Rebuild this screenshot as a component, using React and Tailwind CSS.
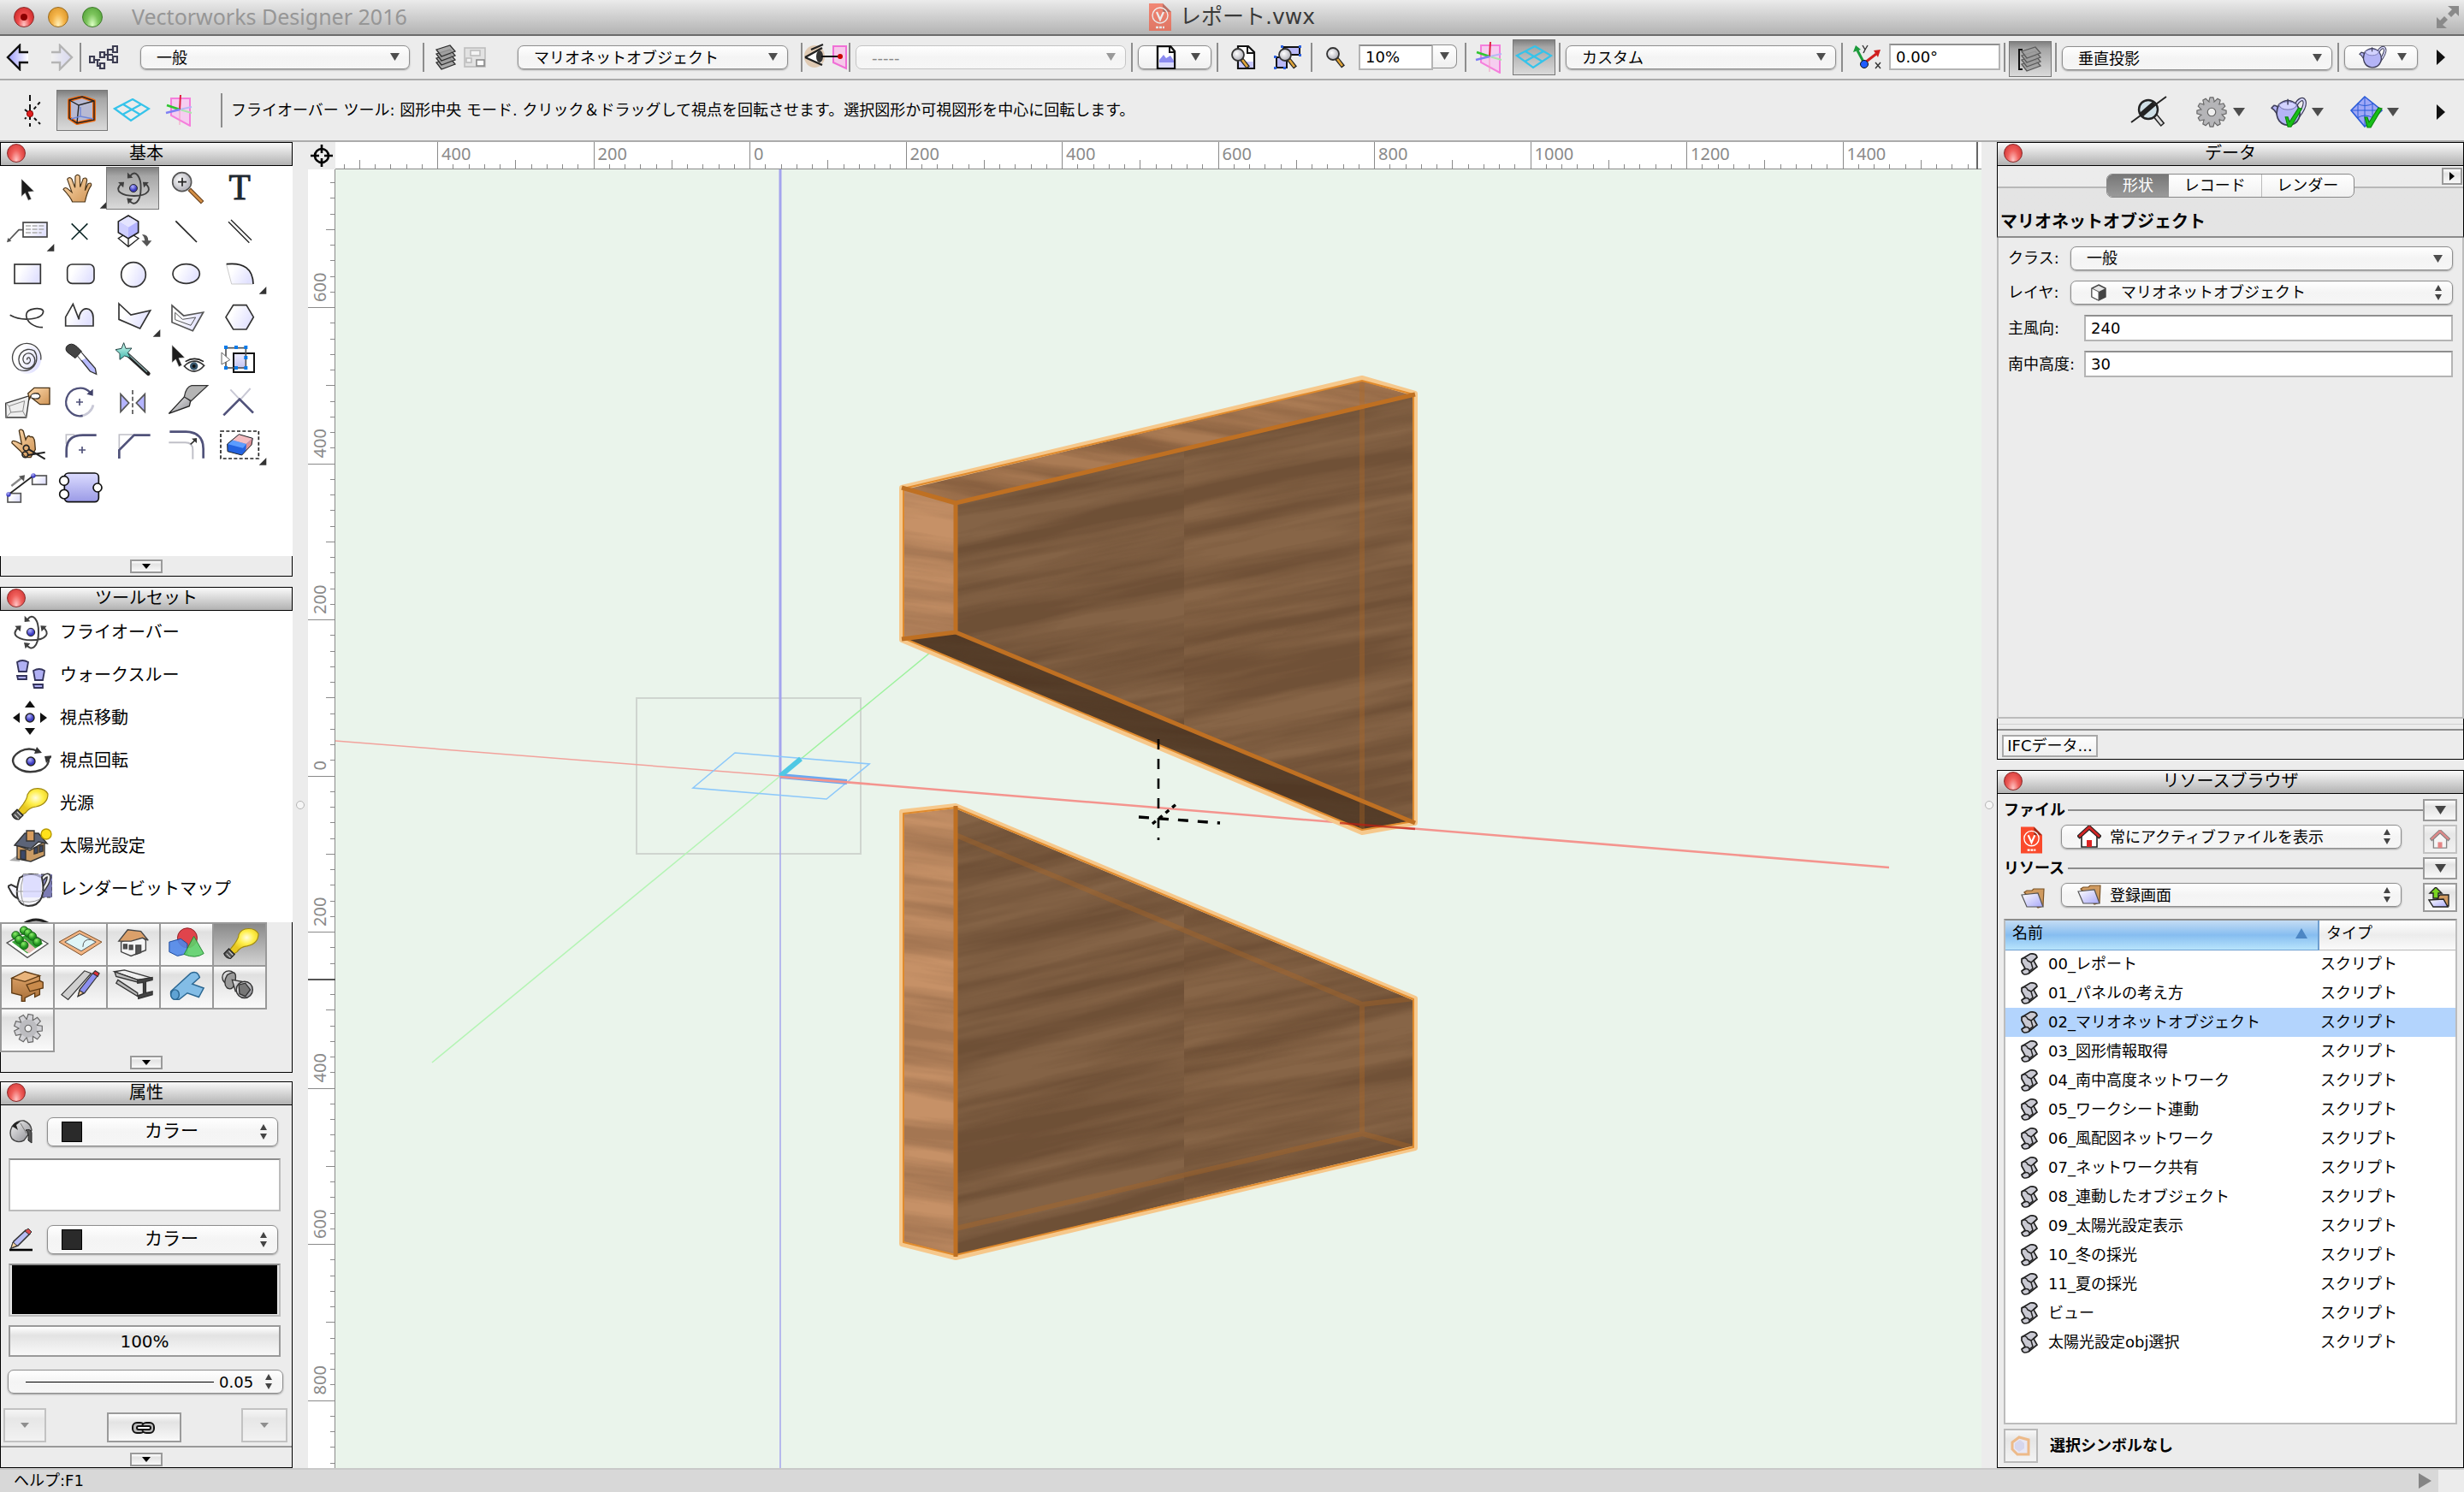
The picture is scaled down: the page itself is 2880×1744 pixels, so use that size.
import React, { useState } from 'react';
import clsx from 'clsx';

const rootFont = "font-['DejaVu_Sans','Noto_Sans_CJK_JP',sans-serif]";

/* ---------- shared gradients and filters ---------- */

const Stops = ({ id, from, to, x2 = 0, y2 = 1 }) => (
  <linearGradient id={id} x1="0" y1="0" x2={x2} y2={y2}>
    <stop offset="0" stopColor={from} />
    <stop offset="1" stopColor={to} />
  </linearGradient>
);

const Defs = () => (
  <svg className="absolute w-0 h-0" aria-hidden="true">
    <defs>
      <linearGradient id="lav" x1="0" y1="0" x2="1" y2="0.4">
        <stop offset="0.3" stopColor="#ffffff" />
        <stop offset="1" stopColor="#e2e2ff" />
      </linearGradient>
      <Stops id="blue" from="#dcdcff" to="#9a9ae6" />
      <Stops id="fold" from="#ffffff" to="#a8a8f8" x2={1} y2={1} />
      <Stops id="skin" from="#ffdcb0" to="#cf9455" x2={1} />
      <Stops id="metal" from="#f4f4f4" to="#8a8a90" x2={1} y2={1} />
      <Stops id="wand" from="#d7fff4" to="#3fb5ab" />
      <Stops id="tan" from="#e0a56a" to="#a86f38" />
      <Stops id="arrowL" from="#9c9cff" to="#ffffff" x2={1} y2={0} />
      <radialGradient id="ball" cx="0.4" cy="0.3">
        <stop offset="0" stopColor="#b5b5ff" />
        <stop offset="1" stopColor="#3b3bc0" />
      </radialGradient>
      <radialGradient id="bulb" cx="0.6" cy="0.35">
        <stop offset="0" stopColor="#fffde0" />
        <stop offset="0.5" stopColor="#ffef4a" />
        <stop offset="1" stopColor="#e8c820" />
      </radialGradient>
      <radialGradient id="leaf" cx="0.4" cy="0.3">
        <stop offset="0" stopColor="#8df06a" />
        <stop offset="1" stopColor="#1c8f1c" />
      </radialGradient>
      <radialGradient id="glass" cx="0.4" cy="0.4">
        <stop offset="0" stopColor="#ffffff" />
        <stop offset="1" stopColor="#bdbdc4" />
      </radialGradient>
    </defs>
  </svg>
);

/* ---------- small icons ---------- */

const Down = ({ className = 'w-3 h-3 text-[#4d4d4d]' }) => (
  <svg viewBox="0 0 12 12" preserveAspectRatio="none" className={className}><path d="M0 0H12L6 12Z" fill="currentColor" /></svg>
);
const UpDown = () => (
  <svg viewBox="0 0 10 18" className="w-[10px] h-[18px]"><path d="M5 0L9 7H1ZM5 18L9 11H1Z" fill="#444" /></svg>
);
const MoreArrow = () => (
  <svg viewBox="0 0 10 18" className="w-[10px] h-[18px]"><path d="M0 0L10 9L0 18Z" fill="#111" /></svg>
);

const BackArrow = ({ dim }) => (
  <svg viewBox="0 0 28 32" className={clsx('w-7 h-8', dim && 'opacity-25 -scale-x-100')}>
    <path d="M26 10H16V2L2 16L16 30V22H26" fill="url(#arrowL)" stroke="#111" strokeWidth="2.4" />
  </svg>
);
const NodesIcon = () => (
  <svg viewBox="0 0 34 28" className="w-[34px] h-7" fill="none" stroke="#3d3d52" strokeWidth="2.2">
    <path d="M6 17H13M10 17V24H13M18 11H22V5H28M18 11H28M22 11V17H28" />
    <path d="M1 13H6V20H1ZM13 8H18V14H13ZM13 21H18V27H13ZM28 1H33V8H28ZM28 13H33V20H28Z" fill="#ececec" />
  </svg>
);
const LayersIcon = ({ bracket }) => (
  <svg viewBox="0 0 32 30" className="w-8 h-[30px]">
    {bracket && <path d="M7 4H3V27H7" fill="none" stroke="#111" strokeWidth="2" />}
    {[15, 10, 5, 0].map(y => (
      <path key={y} d={`M6 ${y + 6}L22 ${y + 1}L28 ${y + 8}L12 ${y + 14}Z`} fill="#9d9d9d" fillOpacity="0.85" stroke={bracket ? '#5a5a5a' : '#2f2f2f'} strokeWidth="1.3" />
    ))}
  </svg>
);
const SheetIcon = () => (
  <svg viewBox="0 0 26 24" className="w-[26px] h-6" stroke="#bdbdbd" strokeWidth="1.6" fill="#e2e2e2">
    <rect x="1" y="1" width="24" height="22" /><rect x="8" y="4" width="11" height="6" fill="#f4f4f4" /><rect x="3" y="13" width="6" height="5" fill="#f4f4f4" />
    <rect x="15" y="15" width="9" height="7" fill="#fff" stroke="#8a8a8a" />
  </svg>
);
const EyeIcon = () => (
  <svg viewBox="0 0 50 34" className="w-[50px] h-[34px]">
    <ellipse cx="12" cy="16" rx="12" ry="13" fill="#d9b48e" opacity="0.6" />
    <path d="M1 17L18 8Q24 14 20 24Z" fill="#fff" />
    <path d="M1 17L21 6M1 17L21 26M8 8L22 2" fill="none" stroke="#222" strokeWidth="2.4" />
    <ellipse cx="18" cy="16" rx="4" ry="7" fill="#333" />
    <path d="M34 4H49V30L34 23Z" fill="#f6c8ea" stroke="#f06fd6" strokeWidth="2" />
    <path d="M20 16H41" stroke="#111" strokeWidth="2" /><circle cx="42" cy="16" r="3" fill="#c00" />
  </svg>
);
const Plane = () => (
  <svg viewBox="0 0 44 28" className="w-11 h-7" fill="none" stroke="#35c3ea" strokeWidth="2.2">
    <path d="M23 1L42 12L21 26L2 12ZM12 7L32 19M33 7L11 19" />
  </svg>
);
const PinkPlane = () => (
  <svg viewBox="0 0 34 38" className="w-[34px] h-[38px]" fill="none" strokeWidth="2">
    <path d="M8 5H30V37L8 25Z" fill="#f6cdf0" stroke="#f57fdc" />
    <path d="M18 18V36" stroke="#f59ac0" strokeWidth="1" /><path d="M18 18L32 22" stroke="#a8e8a8" /><path d="M18 18L32 15" stroke="#b8b8f4" />
    <path d="M19 1L18 18" stroke="#e02040" /><path d="M3 13L18 18" stroke="#2fc52f" strokeWidth="2.6" /><path d="M2 22L18 18" stroke="#8080f4" strokeWidth="2.4" />
  </svg>
);
const PageIcon = () => (
  <svg viewBox="0 0 24 28" className="w-6 h-7">
    <path d="M2 1H17L22 7V27H2Z" fill="#fff" stroke="#111" strokeWidth="2.4" /><path d="M16 1V8H22" fill="none" stroke="#111" strokeWidth="2" />
    <path d="M4 17L9 11L12 15L17 12L21 18V20H4Z" fill="#8c8cf0" /><path d="M4 20H21V26H4Z" fill="#d9d9ff" />
  </svg>
);
const Lens = ({ x = 0, y = 0 }) => (
  <g transform={`translate(${x} ${y})`}>
    <path d="M12 14L20 24" stroke="#222" strokeWidth="5" /><path d="M13 15L19 23" stroke="#e0a53a" strokeWidth="2.6" />
    <circle cx="8" cy="9" r="7" fill="url(#glass)" stroke="#333" strokeWidth="1.8" />
  </g>
);
const FitPage = () => (
  <svg viewBox="0 0 32 30" className="w-8 h-[30px]">
    <path d="M9 2H21L28 9V28H9Z" fill="#fff" stroke="#111" strokeWidth="2.2" /><path d="M20 2V10H28" fill="none" stroke="#111" strokeWidth="2" />
    <path d="M10 20H27V27H10Z" fill="#c9c9ff" /><Lens x={1} y={3} />
  </svg>
);
const FitObjects = () => (
  <svg viewBox="0 0 34 30" className="w-[34px] h-[30px]">
    <path d="M12 3H31V12H12ZM4 15H16V27H4Z" fill="#b9b9f7" stroke="#111" strokeWidth="2" />
    <path d="M1 13h3v3H1zM1 26h3v3H1zM12 26h3v3h-3zM9 1h3v3H9zM30 1h3v3h-3zM30 11h3v3h-3z" fill="#2a5fe0" /><Lens x={6} y={3} />
  </svg>
);
const Magnifier = () => (
  <svg viewBox="0 0 22 26" className="w-[22px] h-[26px]"><Lens /></svg>
);
const AxesIcon = () => (
  <svg viewBox="0 0 34 30" className="w-[34px] h-[30px]">
    <path d="M13 22L5 7" stroke="#1b9a3a" strokeWidth="3" /><path d="M0 9L3 1L9 6Z" fill="#1b9a3a" />
    <path d="M14 21L27 11" stroke="#d02020" strokeWidth="3" /><path d="M24 7L32 6L29 15Z" fill="#d02020" />
    <circle cx="13" cy="23" r="4.5" fill="#1f5cff" stroke="#111" />
    <path d="M11 1L14 6L17 1M14 6L12 10M26 21L32 28M32 21L26 28" fill="none" stroke="#333" strokeWidth="1.4" />
  </svg>
);
const TeapotShape = () => (
  <g strokeLinejoin="round">
    <path d="M31 10C38 -3 49 4 34 24" fill="none" stroke="#3f3f5a" strokeWidth="4.6" />
    <path d="M31 10C38 -3 49 4 34 24" fill="none" stroke="#dcdcff" strokeWidth="2" />
    <path d="M10 25C6 20 6 16 1 14L4 11C9 11 10 15 12 17" fill="#b4b4f6" stroke="#3f3f5a" strokeWidth="1.6" />
    <path d="M10 10C4 22 9 34 21 35C34 35 40 22 32 10Q21 0 10 10Z" fill="#b4b4f6" stroke="#3f3f5a" strokeWidth="1.8" />
    <path d="M10 10Q12 16 21 16Q30 16 32 10Q21 2 10 10Z" fill="#d2d2ff" stroke="#6f6fa8" strokeWidth="1" />
    <path d="M21 3V10" stroke="#3f3f5a" strokeWidth="1.6" />
  </g>
);
const Check = () => <path d="M18 25L21 25L23 31L34 14L38 15L25 37L21 37Z" fill="#18c018" stroke="#0d860d" strokeWidth="1.2" />;
const TeapotIcon = ({ check, className }) => (
  <svg viewBox="0 0 46 38" className={className}><TeapotShape />{check && <Check />}</svg>
);
const NetIcon = () => (
  <svg viewBox="0 0 44 38" className="w-11 h-[38px]">
    <path d="M18 1L38 17L18 36L2 17Z" fill="#9fa8f6" stroke="#2a5bd8" strokeWidth="1.6" />
    <path d="M18 1V36M2 17H38M9 9Q18 14 28 9M9 26Q18 20 28 26M10 9V26M27 9V26" fill="none" stroke="#2a5bd8" />
    <Check />
  </svg>
);
const teeth = Array.from({ length: 12 }, (_, i) => i * 30);
const Gear = ({ className }) => (
  <svg viewBox="-20 -20 40 40" className={className}>
    <g fill="#b5b5b8" stroke="#666" strokeWidth="1.2">
      {teeth.map(a => <path key={a} d="M-4 -11L-2 -18H2L4 -11Z" transform={`rotate(${a})`} />)}
      <circle r="12.5" stroke="none" /><circle r="5" fill="#efefef" />
    </g>
  </svg>
);
const NoLens = () => (
  <svg viewBox="0 0 44 38" className="w-11 h-[38px]">
    <path d="M28 22L38 34" stroke="#222" strokeWidth="6" /><path d="M29 23L37 33" stroke="#ddd" strokeWidth="3" />
    <circle cx="21" cy="16" r="11" fill="#cfdfe6" stroke="#222" strokeWidth="2.4" />
    <path d="M13 22L28 9" stroke="#222" strokeWidth="6" /><path d="M1 31L42 1" stroke="#222" strokeWidth="2" />
  </svg>
);
const PivotIcon = () => (
  <svg viewBox="0 0 28 38" className="w-7 h-[38px]" fill="none" stroke="#111" strokeWidth="2">
    <path d="M15 1V38" strokeDasharray="7 4" /><path d="M15 23L27 9M15 23L27 35M9 18L15 23L9 29" strokeDasharray="4 3" />
    <circle cx="15" cy="23" r="3.6" fill="#e02020" stroke="#900" strokeWidth="1" />
  </svg>
);
const BoxIcon = () => (
  <svg viewBox="0 0 36 34" className="w-9 h-[34px]">
    <path d="M3 5L18 1L32 6V28L12 32L3 26Z" fill="#b8bad2" stroke="#f06a10" strokeWidth="4" strokeLinejoin="round" />
    <path d="M3 5L18 1L32 6V28L12 32L3 26ZM3 5L14 11L32 6M14 11L12 32" fill="none" stroke="#222" strokeWidth="1.4" />
    <path d="M16 13V24L5 27M16 24L31 27" fill="none" stroke="#6f86d8" strokeWidth="1.4" />
  </svg>
);
const VwxIcon = ({ className }) => (
  <svg viewBox="0 0 26 32" className={className}>
    <path d="M0 0H16L26 10V32H0Z" fill="#fa4a2c" /><path d="M16 0V10H26Z" fill="#9c2a18" />
    <circle cx="13" cy="14" r="9" fill="none" stroke="#fff" strokeWidth="1.4" />
    <path d="M9 10L13 19L17 10" fill="none" stroke="#fff" strokeWidth="2.2" /><path d="M8 28H18" stroke="#fff" strokeWidth="2.4" strokeDasharray="3 1" />
  </svg>
);
const HomeIcon = ({ className }) => (
  <svg viewBox="0 0 28 26" className={className}>
    <path d="M5 12V25H23V12L14 4Z" fill="#fff" stroke="#222" strokeWidth="1.6" /><path d="M11 17H17V25H11Z" fill="#d22" />
    <path d="M1 14L14 2L27 14" fill="none" stroke="#222" strokeWidth="5" /><path d="M2 13L14 2L26 13" fill="none" stroke="#d32626" strokeWidth="2.8" />
  </svg>
);
const FolderIcon = ({ up }) => (
  <svg viewBox="0 0 28 24" className="w-7 h-6">
    {up ? (
      <g stroke="#222" strokeWidth="1.4">
        <path d="M11 12L14 9H24V22H8Z" fill="#cf9a60" /><path d="M1 15L18 14L23 23H6Z" fill="url(#fold)" />
        <path d="M9 0L16 7H12V13H6V7H2Z" fill="#7ad420" />
      </g>
    ) : (
      <g stroke="#555" strokeWidth="1.2">
        <path d="M4 5L7 3H13L15 1H27L26 21L20 23Z" fill="#cf9a60" stroke="#7a5224" /><path d="M1 8L20 6L26 22H7Z" fill="url(#fold)" />
      </g>
    )}
  </svg>
);
const ScriptIcon = () => (
  <svg viewBox="0 0 22 26" className="w-[22px] h-[26px]">
    <path d="M2 7L12 1Q19 0 20 5L16 9L20 16L10 24Q3 27 2 21L6 18L2 11Z" fill="#c9c9d2" stroke="#222" strokeWidth="1.7" />
    <path d="M2 7Q7 4 9 9L13 11L20 5M2 21Q9 16 11 21V24M9 9L13 11L15 18L11 21" fill="none" stroke="#222" strokeWidth="1.5" />
  </svg>
);
const CubeIcon = () => (
  <svg viewBox="0 0 18 20" className="w-[18px] h-5">
    <path d="M9 1L17 5V15L9 19L1 15V5Z" fill="#e6e6e6" stroke="#444" strokeWidth="1.4" /><path d="M9 9L17 5V15L9 19Z" fill="#444" /><path d="M1 5L9 9V19L1 15Z" fill="#fff" stroke="#555" />
  </svg>
);
const ResizeArrows = () => (
  <svg viewBox="0 0 30 30" className="w-[30px] h-[30px]"><path d="M15 2H28V14L24 10L19 15L15 11L20 6ZM2 28V15L6 19L11 14L15 18L9 24L14 28Z" fill="#8a8a8a" /></svg>
);

/* ---------- basic palette ---------- */

const pen = { fill: 'url(#lav)', stroke: '#333', strokeWidth: 5 };
const line = { fill: 'none', stroke: '#222', strokeWidth: 5 };
const slate = { fill: 'none', stroke: '#50527a', strokeWidth: 8 };

const Flyover = () => (
  <g fill="none" stroke="#3f3f3f" strokeWidth="6">
    <path d="M424 164C392 192 432 208 470 208C524 208 538 182 510 162M456 136C476 108 496 140 495 180C495 230 470 252 452 222" />
    <path d="M412 158L434 157L431 178ZM502 157L524 158L506 178ZM446 122L446 144L466 142ZM444 216L466 219L449 238Z" fill="#3f3f3f" stroke="none" />
    <circle cx="468" cy="180" r="14" fill="url(#ball)" stroke="#222" strokeWidth="3" />
  </g>
);
const CursorShape = ({ x, y }) => (
  <path transform={`translate(${x} ${y})`} d="M0 0V62L13 50L24 76L35 71L24 46L45 44Z" fill="#1d1d1d" stroke="#ddd" strokeWidth="2" />
);

// every drawing lives on one sheet of 186x150 cells
const tools = [
  { name: '選択', art: <CursorShape x={75} y={147} /> },
  { name: 'パン', more: true, art: <path d="M254 228Q248 212 222 184Q228 173 240 184L252 194L236 148Q244 138 252 148L263 178L264 138Q272 128 280 138L281 176L292 146Q304 140 305 152L298 188L309 164Q322 158 320 170Q306 190 298 228Z" fill="url(#skin)" stroke="#4a3418" strokeWidth="3.5" /> },
  { name: 'フライオーバー', active: true, art: <Flyover /> },
  { name: '拡大', art: <g><path d="M664 184L710 230" stroke="#6b4420" strokeWidth="15" /><path d="M666 186L708 228" stroke="#d58f45" strokeWidth="8" /><circle cx="638" cy="158" r="33" fill="url(#glass)" stroke="#555" strokeWidth="5" /><path d="M624 158H654M639 143V173" {...line} /></g> },
  { name: '文字', art: <text x="840" y="220" textAnchor="middle" fontSize="124" fontFamily="Liberation Serif, serif" fill="#1e2830" stroke="#1e2830" strokeWidth="3">T</text> },

  { name: '引出線', more: true, art: <g><path d="M80 326H66L28 366" fill="none" stroke="#555" strokeWidth="5" /><path d="M24 370L28 354L40 365Z" fill="#555" /><rect x="81" y="300" width="84" height="51" {...pen} stroke="#444" /><path d="M90 312H156M90 324H156M90 336H146" stroke="#aaa" strokeWidth="4" strokeDasharray="18 5" /></g> },
  { name: '基準点', art: <path d="M251 304L307 360M307 304L251 360" {...line} stroke="#102a2a" /> },
  { name: '柱状体', art: <g><path d="M432 345L415 356L450 385L486 356L468 345M450 356V385" {...line} strokeWidth="4" /><path d="M450 276L485 297V335L450 356L415 335V297Z" fill="#b4b4ff" stroke="#222" strokeWidth="5" /><path d="M450 279L482 298L450 317L418 298Z" fill="#e4e4ff" /><path d="M418 298L450 317V353L418 334Z" fill="#cfcfff" /><path d="M498 342Q520 342 520 364H532L515 384L496 364H508Q508 352 498 342Z" fill="#555" /></g> },
  { name: '直線', art: <path d="M616 295L690 369" {...line} /> },
  { name: 'ダブルライン', art: <path d="M801 298L874 371M810 291L882 362" {...line} strokeWidth="4" /> },

  { name: '四角形', art: <rect x="51" y="447" width="91" height="67" {...pen} /> },
  { name: '隅の丸い四角形', art: <rect x="236" y="447" width="94" height="67" rx="17" {...pen} /> },
  { name: '円', art: <circle cx="468" cy="483" r="43" {...pen} /> },
  { name: '楕円', art: <ellipse cx="653" cy="480" rx="47" ry="34" {...pen} /> },
  { name: '円弧', more: true, art: <g><path d="M794 447Q886 440 888 516H812Z" fill="url(#lav)" stroke="#ccc" strokeWidth="3" /><path d="M794 446Q886 436 888 516" {...line} /></g> },

  { name: 'フリーハンド', art: <path d="M35 625C80 650 150 640 152 612C150 595 92 600 92 625C92 650 120 668 150 668" {...line} stroke="#333" /> },
  { name: '曲線', art: <path d="M230 663V632L256 586L277 640C277 592 327 590 327 635V663Z" {...pen} /> },
  { name: '多角形', more: true, art: <path d="M417 585L459 624L527 609L491 672L417 640Z" {...pen} /> },
  { name: '二重線多角形', art: <g><path d="M603 591L644 627L713 615L676 680L603 650Z" {...pen} stroke="#555" /><path d="M614 616L640 640L686 633L669 661L614 641Z" fill="none" stroke="#555" strokeWidth="3" /></g> },
  { name: '正多角形', art: <path d="M818 590H864L889 632L864 675H818L792 632Z" {...pen} /> },

  { name: '螺旋', art: <g><circle cx="94" cy="780" r="50" fill="url(#lav)" /><path d="M96 782a5 5 0 0 1 8-6a12 12 0 0 1-20 14a20 20 0 0 1 30-26a28 28 0 0 1-40 40a36 36 0 0 1 46-54a44 44 0 0 1-54 66a50 50 0 1 1 77-34" fill="none" stroke="#444" strokeWidth="4" /></g> },
  { name: 'スポイト', art: <g><path d="M268 762L280 750L334 812L338 832L316 822Z" fill="#b9bcff" stroke="#333" strokeWidth="4" /><path d="M270 764L282 754L300 776L286 784Z" fill="#fff" /><path d="M234 734Q250 718 270 736L286 752L264 776L240 758Q226 748 234 734Z" fill="#444" stroke="#222" strokeWidth="3" /></g> },
  { name: '属性マジックワンド', art: <g><path d="M448 764L520 830" stroke="#222" strokeWidth="14" strokeLinecap="round" /><path d="M452 764L516 824" stroke="#8aa" strokeWidth="4" /><path d="M434 722L441 742L462 741L448 757L458 775L437 768L420 781L420 760L405 746L426 742Z" fill="url(#wand)" stroke="#244" strokeWidth="3" /></g> },
  { name: '表示切替', art: <g><CursorShape x={603} y={730} /><path d="M646 804Q680 770 716 802Q682 842 646 804Z" fill="#fff" stroke="#333" strokeWidth="5" /><path d="M650 788Q682 768 714 788" {...line} /><circle cx="680" cy="804" r="14" fill="#34546b" /><circle cx="680" cy="804" r="6" fill="#111" /></g> },
  { name: '類似図形選択', art: <g><rect x="819" y="759" width="72" height="66" fill="#fff" stroke="#111" strokeWidth="6" /><rect x="822" y="762" width="40" height="50" fill="url(#blue)" opacity="0.6" /><rect x="792" y="740" width="70" height="70" fill="none" stroke="#555" strokeWidth="5" /><path d="M786 732h12v12h-12zM822 732h12v12h-12zM856 732h12v12h-12zM856 768h12v12h-12zM856 804h12v12h-12zM822 804h12v12h-12zM786 804h12v12h-12z" fill="#0a7ae8" /><path d="M777 756V798L806 782Z" fill="#fff" stroke="#666" strokeWidth="3" /></g> },

  { name: '変形', art: <g><path d="M20 934L103 908L92 984H21Z" fill="#eee" stroke="#333" strokeWidth="4" /><path d="M32 944L86 926L80 962L38 966ZM20 934L32 944M92 984L80 962M21 984L38 966" fill="none" stroke="#888" strokeWidth="3" /><path d="M174 880H120L98 900L104 918Q112 894 134 900Q146 912 134 918L112 916L140 938H174Z" fill="url(#skin)" stroke="#4a3418" strokeWidth="4" /><ellipse cx="124" cy="909" rx="16" ry="9" fill="#fff" stroke="#333" strokeWidth="3" /></g> },
  { name: '回転', art: <g><path d="M327 940A49 49 0 0 1 282 978" {...slate} stroke="#c8c8d6" /><path d="M290 978A49 49 0 1 1 316 896" {...slate} strokeWidth="7" /><path d="M326 884V908L304 902Z" fill="#3f4068" /><path d="M267 930H291M279 918V942" {...slate} strokeWidth="5" /></g> },
  { name: 'ミラー反転', art: <g fill="#b4b4ff" stroke="#555" strokeWidth="5"><path d="M423 902L452 933L423 964ZM508 902L478 933L508 964Z" /><path d="M465 888V980" strokeDasharray="15 8" /></g> },
  { name: '切断', art: <g><path d="M592 970L648 910L668 926L664 944Z" fill="url(#metal)" stroke="#222" strokeWidth="4" /><path d="M646 912Q652 876 672 872H728L670 926Z" fill="#b4b4b4" stroke="#333" strokeWidth="4" /></g> },
  { name: '結合', art: <g><path d="M808 886L842 922L878 882" {...slate} stroke="#c8c8d4" strokeWidth="6" /><path d="M784 976L840 920L888 968" {...slate} /></g> },

  { name: 'トリミング', art: <g><path d="M70 1100L42 1074Q40 1062 56 1068L76 1078L67 1030Q74 1022 82 1032L90 1062Q98 1042 106 1052Q120 1048 122 1072L124 1096L108 1124H90Z" fill="url(#skin)" stroke="#4a3418" strokeWidth="4" /><path d="M98 1094L158 1130M98 1116L158 1106" stroke="#222" strokeWidth="6" /><circle cx="92" cy="1091" r="10" {...line} /><circle cx="88" cy="1114" r="10" {...line} /></g> },
  { name: 'フィレット', art: <g><path d="M232 1076V1044H262" fill="none" stroke="#c0c0c8" strokeWidth="5" /><path d="M233 1124V1100Q233 1046 290 1046H338" {...slate} /><path d="M276 1098H300M288 1086V1110" {...slate} strokeWidth="5" /></g> },
  { name: '面取り', art: <g><path d="M418 1092V1044H466" fill="none" stroke="#c0c0c8" strokeWidth="5" /><path d="M418 1128V1098L470 1046H527" {...slate} /></g> },
  { name: 'オフセット', art: <g><path d="M592 1072H650Q676 1072 676 1098V1130" fill="none" stroke="#c0c0c8" strokeWidth="6" /><path d="M595 1034H652Q713 1036 713 1094V1127" {...slate} /><path d="M668 1078L684 1064" stroke="#333" strokeWidth="5" /><path d="M690 1056V1074L672 1058Z" fill="#333" /></g> },
  { name: '消しゴム', more: true, art: <g><rect x="774" y="1032" width="133" height="96" fill="none" stroke="#222" strokeWidth="5" strokeDasharray="12 7" /><path d="M797 1077L838 1043L886 1057L882 1080L848 1116L798 1103Z" fill="#2463e0" /><path d="M797 1077L814 1063L864 1077L852 1091Z" fill="#5c9cff" /><path d="M814 1063L838 1043L886 1057L864 1077Z" fill="#f4bcc0" /><path d="M864 1077L886 1057L882 1080L862 1101Z" fill="#dc9298" /><path d="M797 1077L838 1043L886 1057L882 1080L848 1116L798 1103Z" fill="none" stroke="#222" strokeWidth="3" /></g> },

  { name: 'コネクタ', art: <g><path d="M40 1224L78 1194" stroke="#888" strokeWidth="7" /><path d="M87 1186L84 1208L66 1190Z" fill="#555" /><rect x="27" y="1250" width="46" height="31" {...pen} stroke="#555" /><rect x="113" y="1188" width="50" height="31" {...pen} stroke="#555" /><path d="M30 1254L117 1188" {...line} /><circle cx="30" cy="1254" r="8" fill="url(#ball)" /><circle cx="117" cy="1188" r="8" fill="url(#ball)" /></g> },
  { name: 'マリオネット', art: <g stroke="#111" strokeWidth="5"><rect x="226" y="1179" width="120" height="101" rx="14" fill="url(#blue)" /><circle cx="225" cy="1206" r="16" fill="#fff" /><circle cx="225" cy="1253" r="16" fill="#fff" /><circle cx="342" cy="1230" r="15" fill="#fff" /></g> },
];

/* ---------- tool sets ---------- */

const BulbShape = () => (
  <g stroke="#a08a10" strokeWidth="1.2">
    <path d="M10 31L17 22Q22 15 22 11A13 11 0 0 1 46 10Q46 22 32 25Q24 26 20 32L15 35Z" fill="url(#bulb)" />
    <path d="M4 34L10 28L17 35L12 40Q6 40 4 34Z" fill="#555" stroke="#222" />
    <path d="M7 34L12 39M10 31L15 36" stroke="#ccc" />
  </g>
);

const sets = [
  ['フライオーバー', <svg viewBox="372 105 186 150" className="w-[62px] h-[50px]"><Flyover /></svg>],
  ['ウォークスルー', (
    <svg viewBox="0 0 50 50" className="w-[50px] h-[50px]" fill="#b0b0f4" stroke="#33335a" strokeWidth="1.8">
      <path d="M10 10Q16 6 23 10L21 21H12ZM10 26H21V30H11ZM29 20Q36 16 42 20L40 31H31ZM29 36H40V40H30Z" />
    </svg>
  )],
  ['視点移動', (
    <svg viewBox="0 0 50 50" className="w-[50px] h-[50px]" fill="#111">
      <path d="M25 5L31 13H19ZM25 45L31 37H19ZM5 25L13 19V31ZM45 25L37 19V31Z" /><circle cx="25" cy="25" r="5" fill="url(#ball)" stroke="#222" strokeWidth="1.4" />
    </svg>
  )],
  ['視点回転', (
    <svg viewBox="0 0 50 50" className="w-[50px] h-[50px]" fill="none" stroke="#3a3a3a" strokeWidth="2.4">
      <path d="M34 14Q24 9 14 14Q0 22 8 32Q20 42 38 36Q48 31 47 22" /><path d="M30 17L39 16L33 9ZM42 20L52 19L44 28Z" fill="#333" stroke="none" />
      <circle cx="26" cy="26" r="5" fill="url(#ball)" stroke="#222" strokeWidth="1.4" />
    </svg>
  )],
  ['光源', <svg viewBox="0 0 50 50" className="w-[50px] h-[50px]"><g transform="translate(0 4)"><BulbShape /></g></svg>],
  ['太陽光設定', (
    <svg viewBox="0 0 52 50" className="w-[52px] h-[50px]" stroke="#333" strokeWidth="1.4">
      <path d="M2 42L14 34V43Z" fill="#aaa" stroke="none" /><path d="M11 24L26 30L43 20V36L27 43L11 40Z" fill="#c99a63" />
      <path d="M8 24L20 10L36 10L46 22L36 20L27 28Z" fill="#5c6478" /><path d="M22 7H31V19H22Z" fill="#d69c5e" />
      <path d="M15 30H21V41L15 40ZM31 27L35 26V33L31 34ZM37 25L41 24V31L37 32Z" fill="#3c4868" /><circle cx="45" cy="11" r="6" fill="#ffe21a" stroke="#b89a00" />
    </svg>
  )],
  ['レンダービットマップ', (
    <svg viewBox="0 0 52 50" className="w-[52px] h-[50px]">
      <rect x="18" y="8" width="34" height="27" fill="#7c7cb4" stroke="#333" strokeDasharray="4 3" />
      <path d="M40 14C50 2 52 14 38 30" fill="none" stroke="#333" strokeWidth="5" /><path d="M40 14C50 2 52 14 38 30" fill="none" stroke="#eee" strokeWidth="2.4" />
      <path d="M14 12C8 30 10 44 24 45C40 45 44 30 40 12Q28 4 14 12ZM12 36C4 34 4 26 0 22L4 20L12 24" fill="#f4f4fb" stroke="#333" strokeWidth="2" />
      <path d="M10 28H42M12 38Q26 43 38 37M18 12Q12 30 20 45" fill="none" stroke="#999" /><rect x="18" y="8" width="21" height="27" fill="#d4d4ff" opacity="0.7" />
    </svg>
  )],
];

const categories = [
  ['造園', <g><path d="M6 23L31 9L56 24L31 41Z" fill="#fff" stroke="#555" strokeWidth="1.4" /><path d="M12 22L32 12L50 24L31 36Z" fill="#3aa53a" /><path d="M27 18L41 30L33 36L25 30Z" fill="#e6c0b8" />{[[27, 8], [32, 11], [37, 15], [43, 22], [17, 14], [21, 19], [27, 26]].map(([x, y]) => <circle key={x} cx={x} cy={y} r="5" fill="url(#leaf)" stroke="#165c16" />)}</g>],
  ['建築', <g><path d="M5 22L30 8L57 22L32 38Z" fill="#f2b482" stroke="#7a4a20" /><path d="M12 22L30 12L50 22L32 33Z" fill="#dff5f7" stroke="#555" /><path d="M34 28Q34 18 44 19" fill="none" stroke="#555" /></g>],
  ['住宅', <g stroke="#444" strokeWidth="1.4"><path d="M16 22V34L28 39L46 32V20L38 12Z" fill="#f5f5f5" /><path d="M13 21L24 7L40 9L49 20L42 17L28 21Z" fill="#dba06a" /><path d="M34 26H40V35L34 37ZM19 25H23V30H19ZM26 26H30V31H26Z" fill="#555" /></g>],
  ['3D', <g><circle cx="32" cy="17" r="12" fill="#e0444c" stroke="#8c1c22" /><path d="M10 22L24 18L32 24V36L20 39L10 34Z" fill="#4f86e8" stroke="#1c4a9c" fillOpacity="0.9" /><path d="M40 15L52 36Q42 43 28 37Z" fill="#5dd06a" stroke="#258a33" fillOpacity="0.9" /></g>],
  ['ビジュアライズ', <g transform="translate(8 2)"><BulbShape /></g>],
  ['家具', <g stroke="#5e3a14" strokeWidth="1.4"><path d="M12 14L26 8L46 11V34L40 37V32L28 38V42H24V35L12 32Z" fill="url(#tan)" /><path d="M12 14L28 18L46 11L28 6Z" fill="#e9b47c" /><path d="M30 22L46 17L50 19V26L34 30Z" fill="#c98b4c" /></g>],
  ['寸法', <g stroke="#333" strokeWidth="1.2"><path d="M8 34L36 5L44 8L16 40Z" fill="#cfcfcf" /><path d="M28 36L30 28L46 8L52 11L36 32Z" fill="#8c90f0" /><path d="M46 8L49 5L54 8L52 12Z" fill="#e03038" /><path d="M28 36L30 29L35 32Z" fill="#f0c896" /></g>],
  ['機械', <g stroke="#333" strokeWidth="1.4"><path d="M8 6L20 4L54 14L36 16Z" fill="#eee" /><path d="M8 6L36 16L37 19L10 12ZM12 16L36 32V36L10 20Z" fill="#bbb" /><path d="M36 16L54 13V16L46 18V32L54 30V34L37 39V35L43 33V19L36 20Z" fill="#444" /></g>],
  ['配管', <g fill="#83bde6" stroke="#2b6792" strokeWidth="1.5"><path d="M12 30L36 8Q44 4 47 13L38 21L52 26L46 37L32 32L22 40Q10 40 12 30Z" /><ellipse cx="17" cy="34" rx="5" ry="6" fill="#5fa3d4" /></g>],
  ['金物', <g stroke="#333" strokeWidth="1.4" fill="url(#metal)"><circle cx="18" cy="13" r="8" /><path d="M16 10Q28 2 26 16Q24 30 16 26Q10 20 16 10Z" fill="#999" /><path d="M22 16L34 18V30L26 30Z" /><circle cx="37" cy="28" r="10" /><path d="M30 22L38 20L44 28L38 36L31 33Z" fill="#777" /></g>],
  ['カスタム', <g transform="translate(32 23)"><g fill="#d2d2d6" stroke="#666" strokeWidth="1.2">{[0, 40, 80, 120, 160, 200, 240, 280, 320].map(a => <path key={a} d="M-4 -9L-3 -17H3L4 -9Z" transform={`rotate(${a + 10})`} />)}<circle r="11" fill="#bcbcc0" stroke="none" /><circle r="4" fill="#f2f2f2" /></g></g>],
];

/* ---------- controls ---------- */

const PopUp = ({ label, options, className, arrow = 'down', disabled, pad = 'pl-[18px]', text = 'text-[18px]', children }) => (
  <div className={clsx('relative flex items-center min-w-0', className)}>
    <select
      aria-label={label}
      disabled={disabled}
      className={clsx(
        'appearance-none w-full h-full rounded-[7px] border bg-linear-to-b from-white via-[#f4f4f4] to-[#f6f6f6] outline-none',
        pad, text,
        disabled ? 'border-[#c4c4c4] text-[#888]' : 'border-[#8e8e8e] text-black shadow-[0_1px_2px_rgba(0,0,0,0.35)]'
      )}
    >
      {options.map(o => <option key={o}>{o}</option>)}
    </select>
    {children && <span className="absolute left-[17px] pointer-events-none flex items-center">{children}</span>}
    <span className="absolute right-[12px] pointer-events-none">
      {arrow === 'down' ? <Down className={clsx('w-[11px] h-[9px]', disabled ? 'text-[#999]' : 'text-[#4d4d4d]')} /> : <UpDown />}
    </span>
  </div>
);

const Sep = ({ className = 'h-[34px]' }) => <div className={clsx('w-[2px] shrink-0 bg-[#8d8d8d]', className)} />;

const pressed = 'border border-[#777] bg-linear-to-b from-[#7f7f7f] via-[#a6a6a6] via-20% to-[#dadada]';
const square = 'border-2 border-[#9a9a9a] bg-linear-to-b from-white via-[#e3e3e3] via-30% to-[#f8f8f8] flex items-center justify-center';

const IconButton = ({ name, active, className, children }) => (
  <button type="button" aria-label={name} className={clsx('flex items-center justify-center shrink-0', active && pressed, className)}>
    {children}
  </button>
);

const PanelTitle = ({ children }) => (
  <div className="relative h-7 shrink-0 flex items-center justify-center border border-black bg-linear-to-b from-[#fafafa] to-[#b2b2b2] text-[20px] leading-6 pb-[2px]">
    <button type="button" aria-label="閉じる" className="absolute left-[7px] w-[22px] h-[22px] rounded-full border border-[#8a2a2a] bg-radial-[at_50%_90%] from-[#ffc4c4] via-[#f0605c] via-45% to-[#c92a2a]" />
    <h2>{children}</h2>
  </div>
);

const Expander = () => (
  <button type="button" aria-label="展開" className={clsx(square, 'w-[38px] h-4')}>
    <Down className="w-[10px] h-[6px] text-black" />
  </button>
);

const Field = ({ value, label, id, className }) => (
  <input id={id} aria-label={label} defaultValue={value} className={clsx('bg-white border-2 border-[#b4b4b4] border-t-[#8f8f8f] text-[18px] px-[6px] outline-none min-w-0', className)} />
);

/* ---------- top bars ---------- */

const TitleBar = () => (
  <header className="h-[42px] shrink-0 grid grid-cols-[1fr_auto_1fr] items-center border-b-2 border-[#6b6b6b] bg-linear-to-b from-[#ebebeb] to-[#b3b3b3] leading-8">
    <div className="flex items-center pl-4 gap-4">
      <button type="button" aria-label="閉じる" className="w-6 h-6 rounded-full border border-[#8a2a2a] bg-radial-[at_50%_90%] from-[#ffc4c4] via-[#ee4b4b] via-45% to-[#c02020] flex items-center justify-center">
        <span className="w-2 h-2 rounded-full bg-[#8c0000]" />
      </button>
      <button type="button" aria-label="しまう" className="w-6 h-6 rounded-full border border-[#9a6a1c] bg-radial-[at_50%_90%] from-[#fff0b8] via-[#f5b54a] via-45% to-[#d08a20]" />
      <button type="button" aria-label="拡大" className="w-6 h-6 rounded-full border border-[#3d7a2a] bg-radial-[at_50%_90%] from-[#dcffc4] via-[#7cc45c] via-45% to-[#4a9a30]" />
      <span className="pl-[18px] pb-[2px] text-[#969696] font-['Noto_Sans',sans-serif] text-[25px]">Vectorworks Designer 2016</span>
    </div>
    <h1 className="flex items-center gap-[10px] text-[#3a3a3a] text-[25px]">
      <VwxIcon className="w-[26px] h-8 opacity-60" />
      レポート.vwx
    </h1>
    <div className="flex justify-end pr-1"><ResizeArrows /></div>
  </header>
);

const ViewBar = () => (
  <div className="h-[52px] shrink-0 flex items-center border-b-2 border-[#ababab] pb-px">
    <div className="flex items-center justify-between w-[93px] px-[7px]">
      <IconButton name="前のビュー"><BackArrow /></IconButton>
      <IconButton name="次のビュー"><BackArrow dim /></IconButton>
    </div>
    <Sep />
    <div className="flex items-center pl-[9px] pr-[15px] gap-[26px]">
      <IconButton name="クラス"><NodesIcon /></IconButton>
      <PopUp label="クラス" options={['一般']} className="w-[315px] h-7" />
    </div>
    <Sep />
    <div className="flex items-center w-[440px] pl-2 pr-[15px] gap-[6px]">
      <IconButton name="レイヤ"><LayersIcon /></IconButton>
      <SheetIcon />
      <PopUp label="レイヤ" options={['マリオネットオブジェクト']} className="w-[316px] h-7 ml-auto" />
    </div>
    <Sep />
    <IconButton name="基準平面" className="w-[54px]"><EyeIcon /></IconButton>
    <Sep />
    <div className="px-[6px]"><PopUp label="平面" disabled options={['-----']} className="w-[316px] h-7" /></div>
    <Sep />
    <div className="px-[6px]">
      <button type="button" aria-label="用紙" className="w-[86px] h-7 rounded-[7px] border border-[#8e8e8e] bg-linear-to-b from-white to-[#f0f0f0] shadow-[0_1px_2px_rgba(0,0,0,0.35)] flex items-center justify-between pl-5 pr-3">
        <PageIcon /><Down className="w-[11px] h-[9px] text-[#4d4d4d]" />
      </button>
    </div>
    <Sep />
    <div className="flex items-center justify-between w-[108px] pl-[14px] pr-[10px]">
      <IconButton name="用紙全体"><FitPage /></IconButton>
      <IconButton name="図形全体"><FitObjects /></IconButton>
    </div>
    <Sep />
    <div className="flex items-center pl-4 pr-[9px] gap-4">
      <Magnifier />
      <div className="flex w-[115px] h-[30px]">
        <Field label="縮尺" value="10%" className="flex-1 h-full" />
        <button type="button" aria-label="縮尺の選択" className="w-7 h-[28px] rounded-r-[7px] border border-l-0 border-[#8e8e8e] bg-linear-to-b from-white to-[#efefef] flex items-center justify-center">
          <Down className="w-[11px] h-[9px] text-[#4d4d4d]" />
        </button>
      </div>
    </div>
    <Sep />
    <div className="flex items-center justify-between w-[108px] pl-[9px] pr-1">
      <IconButton name="スクリーン平面"><PinkPlane /></IconButton>
      <IconButton name="レイヤ平面" active className="w-[50px] h-[42px]"><Plane /></IconButton>
    </div>
    <Sep />
    <div className="px-[6px]"><PopUp label="ビュー" options={['カスタム']} className="w-[316px] h-7" /></div>
    <Sep />
    <div className="flex items-center justify-between w-[188px] pl-3 pr-1">
      <AxesIcon />
      <Field label="回転角度" value="0.00°" className="w-[130px] h-[31px]" />
    </div>
    <Sep />
    <div className="px-1 pt-1"><IconButton name="統合ビュー" active className="w-[50px] h-[42px]"><LayersIcon bracket /></IconButton></div>
    <Sep />
    <div className="px-[6px] pt-[2px]"><PopUp label="投影" options={['垂直投影']} className="w-[316px] h-7" /></div>
    <Sep />
    <div className="px-[6px]">
      <button type="button" aria-label="レンダリング" className="w-[86px] h-7 rounded-[7px] border border-[#8e8e8e] bg-linear-to-b from-white to-[#f0f0f0] shadow-[0_1px_2px_rgba(0,0,0,0.35)] flex items-center justify-between pl-4 pr-3">
        <TeapotIcon className="w-[34px] h-7" /><Down className="w-[11px] h-[9px] text-[#4d4d4d]" />
      </button>
    </div>
    <IconButton name="その他" className="ml-auto mr-[22px]"><MoreArrow /></IconButton>
  </div>
);

const ModeBar = () => (
  <div className="h-[72px] shrink-0 flex items-center border-b-2 border-[#ababab]">
    <div className="flex items-center w-[258px] pl-5 gap-[18px]">
      <IconButton name="原点中央"><PivotIcon /></IconButton>
      <IconButton name="図形中央" active className="w-[60px] h-12"><BoxIcon /></IconButton>
      <div className="flex items-center gap-4 -ml-3">
        <IconButton name="作業平面中央"><Plane /></IconButton>
        <IconButton name="ビュー中央"><PinkPlane /></IconButton>
      </div>
    </div>
    <Sep className="h-10" />
    <p className="pl-[10px] text-[18px] leading-6 whitespace-nowrap">
      フライオーバー ツール: 図形中央 モード. クリック＆ドラッグして視点を回転させます。選択図形か可視図形を中心に回転します。
    </p>
    <div className="ml-auto flex items-center mr-[22px] pt-1">
      <IconButton name="スナップルーペ" className="mr-8"><NoLens /></IconButton>
      <IconButton name="設定" className="mr-[30px] gap-[6px]"><Gear className="w-[38px] h-[38px]" /><Down className="w-[14px] h-[10px] text-[#4d4d4d]" /></IconButton>
      <IconButton name="レンダー設定" className="mr-[30px] gap-1"><TeapotIcon check className="w-11 h-[38px]" /><Down className="w-[14px] h-[10px] text-[#4d4d4d]" /></IconButton>
      <IconButton name="メッシュ" className="mr-11"><NetIcon /><Down className="w-[14px] h-[10px] text-[#4d4d4d]" /></IconButton>
      <IconButton name="その他"><MoreArrow /></IconButton>
    </div>
  </div>
);

/* ---------- left palettes ---------- */

const BasicPalette = () => (
  <section className="bg-[#ececec]">
    <PanelTitle>基本</PanelTitle>
    <div className="bg-white h-[456px]">
      <div className="grid grid-cols-[repeat(5,62px)] auto-rows-[50px] pt-px">
        {tools.map((t, i) => {
          const x = (i % 5) * 186;
          const y = 105 + Math.floor(i / 5) * 150;
          return (
            <button key={t.name} type="button" aria-label={t.name} className={clsx('w-[62px] h-[50px]', t.active && pressed)}>
              <svg viewBox={`${x} ${y} 186 150`} className="w-full h-full overflow-visible">
                {t.art}
                {t.more && <path d={`M${x + 190} ${y + 120}V${y + 146}H${x + 164}Z`} fill="#333" />}
              </svg>
            </button>
          );
        })}
      </div>
    </div>
    <div className="h-6 border border-t-0 border-black flex items-center justify-center"><Expander /></div>
  </section>
);

const ToolSets = () => (
  <section className="bg-[#ececec] mt-3">
    <PanelTitle>ツールセット</PanelTitle>
    <ul className="bg-white h-[364px] overflow-hidden">
      {sets.map(([name, icon]) => (
        <li key={name}>
          <button type="button" className="flex items-center h-[50px] w-full text-left text-[20px] leading-6">
            <span className="w-[70px] flex justify-center shrink-0">{icon}</span>
            {name}
          </button>
        </li>
      ))}
      <li className="pl-6 pt-[9px]"><svg viewBox="0 0 34 20" className="w-[34px] h-5"><path d="M2 8Q16 -3 32 6L30 20H4Z" fill="#bbb" stroke="#222" strokeWidth="3" /></svg></li>
    </ul>
    <div className="border border-t-0 border-black h-[176px] flex flex-col items-center">
      <div className="grid grid-cols-[repeat(5,62px)] auto-rows-[50px] self-start pt-px">
        {categories.map(([name, art]) => (
          <button
            key={name}
            type="button"
            aria-label={name}
            className={clsx('border border-[#999] outline outline-[#999]', name === 'ビジュアライズ' ? 'bg-linear-to-b from-[#8a8a8a] to-[#d2d2d2]' : 'bg-linear-to-b from-white via-[#e0e0e0] via-20% to-[#fafafa]')}
          >
            <svg viewBox="0 0 62 50" className="w-full h-full">{art}</svg>
          </button>
        ))}
      </div>
      <div className="mt-auto mb-[3px]"><Expander /></div>
    </div>
  </section>
);

const BucketIcon = () => (
  <svg viewBox="0 0 28 28" className="w-7 h-7"><path d="M4 8Q0 16 4 22Q10 28 18 24L27 12Q26 4 18 1Q10 0 4 8Z" fill="url(#metal)" stroke="#444" strokeWidth="1.4" /><path d="M4 8Q6 2 14 2L9 6L11 12Q6 8 4 8Z" fill="#222" /><path d="M14 4L21 16" stroke="#777" /><path d="M20 12Q26 10 27 15V27L23 24Q24 14 20 12Z" fill="#555" stroke="#222" /></svg>
);
const PencilIcon = () => (
  <svg viewBox="0 0 28 28" className="w-7 h-7"><path d="M3 24L6 16L20 3L25 7L11 21Z" fill="#b8bcf4" stroke="#333" strokeWidth="1.5" /><path d="M19 4L23 1L27 5L24 8Z" fill="#d94a50" stroke="#333" /><path d="M3 24L5 17L10 21Z" fill="#f2cf9e" stroke="#333" /><path d="M1 26H28" stroke="#000" strokeWidth="2.6" /></svg>
);

const ColorSelect = ({ label }) => (
  <PopUp label={label} options={['カラー']} arrow="updown" pad="pl-[113px]" text="text-[21px]" className="w-[270px] h-[34px]">
    <span className="w-6 h-6 bg-[#2a2a2a] border border-black" />
  </PopUp>
);

const Attributes = () => (
  <section className="bg-[#ececec] flex flex-col flex-1 mt-[10px]">
    <PanelTitle>属性</PanelTitle>
    <div className="border-x border-b border-black flex-1 flex flex-col pt-[14px]">
      <div className="flex items-center px-[9px] gap-[17px]"><BucketIcon /><ColorSelect label="面" /></div>
      <button type="button" aria-label="面の色" className="mt-[14px] mx-[9px] w-[318px] h-[62px] border-2 border-[#bcbcbc] border-t-[#8d8d8d] bg-white" />
      <div className="flex items-center px-[9px] gap-[17px] mt-4"><PencilIcon /><ColorSelect label="線" /></div>
      <button type="button" aria-label="線の色" className="mt-[11px] mx-[9px] w-[318px] h-[62px] border-2 border-[#bcbcbc] border-t-[#8d8d8d] bg-[#e8e8e8] px-[2px] pb-px"><span className="block w-full h-full bg-black" /></button>
      <button type="button" className={clsx(square, 'mt-[10px] mx-[9px] w-[318px] h-[37px] text-[20px]')}>100%</button>
      <PopUp label="線の太さ" options={['0.05']} arrow="updown" pad="pl-[246px]" className="mt-[15px] mx-2 w-[322px] h-7">
        <span className="w-[220px] h-px bg-black ml-1" />
      </PopUp>
      <div className="flex items-end justify-between pl-[3px] pr-[5px] mt-[17px]">
        <button type="button" aria-label="始点マーカー" className={clsx(square, 'w-[50px] h-10 opacity-50')}><Down className="w-[10px] h-[6px] text-[#333]" /></button>
        <button type="button" aria-label="マーカーの連動" className={clsx(square, 'w-[87px] h-[35px]')}>
          <svg viewBox="0 0 28 14" className="w-7 h-[14px]" fill="none" stroke="#111" strokeWidth="2"><rect x="1" y="1" width="14" height="12" rx="5" fill="#bbb" /><rect x="12" y="1" width="14" height="12" rx="5" fill="#bbb" /><rect x="6" y="5" width="16" height="4" rx="2" fill="#fff" /></svg>
        </button>
        <button type="button" aria-label="終点マーカー" className={clsx(square, 'w-[54px] h-10 opacity-50')}><Down className="w-[10px] h-[6px] text-[#333]" /></button>
      </div>
      <div className="mt-1 border-t-2 border-[#999] flex-1 flex items-end justify-center pb-px"><Expander /></div>
    </div>
  </section>
);

/* ---------- drawing area ---------- */

const STEP = 182.5;
const labels = n => Array.from({ length: n }, (_, i) => i);
const rulerFont = "font-['Noto_Sans',sans-serif] bg-white";

const TopRuler = () => (
  <svg className={clsx('h-8 w-full', rulerFont)} fontSize="20" fill="#8a8a8a">
    {labels(110).map(i => {
      const x = 119 - STEP + i * (STEP / 10);
      const len = i % 10 === 0 ? 32 : i % 5 === 0 ? 10 : 5;
      return <rect key={i} x={Math.round(x)} y={31 - len} width="1" height={len} />;
    })}
    {labels(10).map(i => <text key={i} x={124 + i * STEP} y="21">{Math.abs(i - 2) * 200}</text>)}
    <rect x="0" y="31" width="100%" height="1" />
    <rect x="1918" y="0" width="2" height="32" fill="#666" />
  </svg>
);

const SideRuler = () => (
  <svg className={clsx('w-8 h-full', rulerFont)} fontSize="20" fill="#8a8a8a">
    {labels(90).map(i => {
      const y = 161 - STEP + i * (STEP / 10);
      const len = i % 10 === 0 ? 32 : i % 5 === 0 ? 10 : 5;
      return <rect key={i} x={31 - len} y={Math.round(y)} width={len} height="1" />;
    })}
    {labels(8).map(i => (
      <text key={i} transform={`translate(21 ${155 + i * STEP}) rotate(-90)`}>{Math.abs(3 - i) * 200}</text>
    ))}
    <rect x="31" y="0" width="1" height="100%" />
    <rect x="0" y="946" width="32" height="2" fill="#555" />
  </svg>
);

const Face = ({ id, points, fill, dark = 0.32, angle = -11, shift = 0 }) => (
  <g>
    <clipPath id={id}><polygon points={points} /></clipPath>
    <polygon points={points} fill={fill} />
    <g clipPath={`url(#${id})`} opacity={dark}>
      <rect x="200" y="-100" width="1700" height="1900" filter="url(#grain)" transform={`rotate(${angle} 1100 800) translate(0 ${shift})`} />
    </g>
  </g>
);

const edge = { fill: 'none', stroke: '#e08a2c', strokeWidth: 5, strokeLinejoin: 'round' };

const Scene = () => (
  <svg className="absolute inset-0 w-full h-full">
    <defs>
      <filter id="grain" x="0" y="0" width="100%" height="100%" colorInterpolationFilters="sRGB">
        <feTurbulence type="fractalNoise" baseFrequency="0.0024 0.036" numOctaves="5" seed="11" />
        <feColorMatrix values="0 0 0 0 0.26  0 0 0 0 0.16  0 0 0 0 0.09  0 2.6 0 0 -0.8" />
      </filter>
    </defs>
    {/* the scene is laid out from the window corner, the view starts at 392,198 */}
    <g transform="translate(-392 -198)">
      <rect x="744" y="816" width="262" height="182" fill="none" stroke="#cfd5cf" strokeWidth="2" />
      <path d="M505 1242L912 907" stroke="#b4f4b4" strokeWidth="1.5" /><path d="M912 907L1110 744" stroke="#9df29d" strokeWidth="1.5" />
      <path d="M392 866L912 907" stroke="#f2a29c" strokeWidth="1.5" />
      <path d="M912 198V907" stroke="#a4a4ee" strokeWidth="3" /><path d="M912 907V1720" stroke="#a4a4ee" strokeWidth="1.5" />
      <path d="M859 880L1016 893L966 934L810 921Z" fill="none" stroke="#8cc8fa" strokeWidth="1.6" />
      <path d="M912 907L990 914" stroke="#6aa8f0" strokeWidth="6" /><path d="M912 907L936 887" stroke="#4fc8e4" strokeWidth="6" />
      <path d="M912 908L2208 1014" stroke="#f4948e" strokeWidth="2.6" />

      <Face id="f1" points="1054,570 1592,443 1654,460 1117,588" fill="#aa7b54" angle={10} />
      <Face id="f2" points="1054,570 1117,588 1117,739 1054,747" fill="#c69167" angle={8} dark={0.25} />
      <Face id="f3" points="1054,747 1117,739 1654,962 1592,972" fill="#5a422d" angle={4} />
      <Face id="f4" points="1117,588 1384,524 1384,850 1117,739" fill="#846346" />
      <Face id="f5" points="1384,524 1654,460 1654,962 1384,850" fill="#876547" shift={-260} />
      <Face id="f6" points="1054,949 1117,942 1117,1469 1054,1453" fill="#c69167" angle={8} dark={0.25} />
      <Face id="f7" points="1117,942 1384,1054 1384,1406 1117,1469" fill="#846346" angle={-13} shift={120} />
      <Face id="f8" points="1384,1054 1654,1167 1654,1342 1384,1406" fill="#876547" shift={-140} />

      <g fill="none" stroke="#b8691e" strokeOpacity="0.32" strokeWidth="6">
        <path d="M1592 443V972M1117 976L1592 1174V1325L1117 1436M1592 1174L1654 1167M1592 1325L1654 1342" />
      </g>
      <path d="M1054 570L1592 442L1654 460V962L1592 973L1054 748Z" {...edge} stroke="#f6c88c" strokeWidth="6" />
      <path d="M1054 949L1117 942L1654 1167V1342L1117 1470L1054 1454Z" {...edge} stroke="#f6c88c" strokeWidth="6" />
      <path d="M1056 571L1592 445L1652 461V960L1592 970L1056 746Z" {...edge} strokeWidth="2" />
      <path d="M1056 951L1117 944L1652 1168V1341L1117 1467L1056 1452Z" {...edge} strokeWidth="2" />
      <path d="M1054 570L1117 588L1654 461M1117 588V739L1054 747M1117 739L1654 962M1117 942V1469" {...edge} stroke="#bf7022" />
      <path d="M1566 962L1654 969" stroke="#c01c10" strokeOpacity="0.7" strokeWidth="2.4" />

      <g stroke="#000" fill="none">
        <path d="M1354 864V982" strokeWidth="2.6" strokeDasharray="12 11" />
        <path d="M1331 955L1426 962" strokeWidth="3.4" strokeDasharray="12 11" /><path d="M1347 963L1376 939" strokeWidth="3.4" strokeDasharray="5 5" />
      </g>
    </g>
  </svg>
);

const DrawingArea = () => (
  <main className="flex-1 min-w-0 grid grid-cols-[32px_1fr] grid-rows-[32px_1fr]">
    <div className="flex items-center justify-center">
      <svg viewBox="0 0 26 26" className="w-[26px] h-[26px]" fill="none" stroke="#000" strokeWidth="2.6"><circle cx="13" cy="13" r="8" /><path d="M13 0V10M13 16V26M0 13H10M16 13H26" /></svg>
    </div>
    <TopRuler />
    <SideRuler />
    <div className="relative bg-[#eaf4eb] overflow-hidden"><Scene /></div>
  </main>
);

/* ---------- right palettes ---------- */

const tabs = ['形状', 'レコード', 'レンダー'];

const DataPanel = () => {
  const [tab, setTab] = useState('形状');
  return (
    <section className="bg-[#ececec] flex flex-col">
      <PanelTitle>データ</PanelTitle>
      <div className="border-x border-b-2 border-black border-b-[#8c8c8c] h-[84px] relative bg-linear-to-b from-[#ececec] from-[24px] to-[#e4e4e4] to-[26px]">
        <div className="absolute top-[24px] inset-x-0 h-[2px] bg-[#b8b8b8]" />
        <div role="tablist" className="relative mx-auto mt-[9px] w-[290px] h-7 flex rounded-[7px] border border-[#888] bg-linear-to-b from-white to-[#f1f1f1] overflow-hidden text-[18px] leading-6">
          {tabs.map((t, i) => (
            <button
              key={t}
              type="button"
              role="tab"
              aria-selected={t === tab}
              onClick={() => setTab(t)}
              className={clsx(i === 0 ? 'w-[72px]' : 'flex-1', i === 2 && 'border-l border-[#bbb]', t === tab && 'bg-linear-to-b from-[#777] to-[#9a9a9a] text-white')}
            >
              {t}
            </button>
          ))}
        </div>
        <button type="button" aria-label="メニュー" className={clsx(square, 'absolute right-px top-[2px] w-6 h-5')}>
          <svg viewBox="0 0 6 10" className="w-[6px] h-[10px]"><path d="M0 0L6 5L0 10Z" /></svg>
        </button>
        <h3 className="relative mt-[14px] pl-[3px] text-[20px] leading-7 font-bold">マリオネットオブジェクト</h3>
      </div>
      <div className="h-[562px] border-x-2 border-b-2 border-[#bcbcbc] pt-[10px] pl-[11px] pr-[11px] flex flex-col text-[18px] leading-6">
        <div className="flex items-center justify-between h-7">
          <span>クラス:</span><PopUp label="クラス" options={['一般']} className="w-[447px] h-7" />
        </div>
        <div className="flex items-center justify-between h-7 mt-3">
          <span>レイヤ:</span>
          <PopUp label="レイヤ" options={['マリオネットオブジェクト']} arrow="updown" pad="pl-[58px]" className="w-[447px] h-7">
            <span className="pl-[7px]"><CubeIcon /></span>
          </PopUp>
        </div>
        <div className="flex items-center justify-between mt-3"><label htmlFor="wind">主風向:</label><Field id="wind" value="240" className="w-[431px] h-[31px]" /></div>
        <div className="flex items-center justify-between mt-[11px]"><label htmlFor="sun">南中高度:</label><Field id="sun" value="30" className="w-[431px] h-[31px]" /></div>
      </div>
      <div className="border border-t-0 border-black h-12 pt-[6px]">
        <div className="border-t border-[#d0d0d0] h-[6px]" />
        <div className="border-t-2 border-[#8c8c8c] pt-[5px] pl-[5px]">
          <button type="button" className="border-2 border-[#a8a8a8] w-[112px] h-[26px] bg-linear-to-b from-white to-[#f0f0f0] text-[18px] leading-5 whitespace-nowrap">IFCデータ...</button>
        </div>
      </div>
    </section>
  );
};

const resources = [
  '00_レポート', '01_パネルの考え方', '02_マリオネットオブジェクト', '03_図形情報取得', '04_南中高度ネットワーク', '05_ワークシート連動',
  '06_風配図ネットワーク', '07_ネットワーク共有', '08_連動したオブジェクト', '09_太陽光設定表示', '10_冬の採光', '11_夏の採光', 'ビュー', '太陽光設定obj選択',
];

const GroupHeader = ({ children }) => (
  <div className="flex items-center h-[26px]">
    <h3 className="text-[18px] leading-6 font-bold w-[75px]">{children}</h3>
    <div className="flex-1 h-[2px] bg-[#8c8c8c]" />
    <button type="button" aria-label={`${children}メニュー`} className={clsx(square, 'w-10 h-[26px]')}><Down className="w-[13px] h-[10px] text-[#444]" /></button>
  </div>
);

const ResourceBrowser = () => {
  const [selected, setSelected] = useState('02_マリオネットオブジェクト');
  return (
    <section className="bg-[#ececec] flex flex-col flex-1 mt-3">
      <PanelTitle>リソースブラウザ</PanelTitle>
      <div className="flex-1 flex flex-col border-x border-b border-black px-[7px] pt-[6px]">
        <GroupHeader>ファイル</GroupHeader>
        <div className="flex items-start mt-1 h-[34px]">
          <VwxIcon className="w-[25px] h-8 ml-[20px] mt-[2px]" />
          <PopUp label="ファイル" options={['常にアクティブファイルを表示']} arrow="updown" pad="pl-[56px]" className="w-[398px] h-7 ml-[22px]">
            <HomeIcon className="w-7 h-[26px] ml-[2px]" />
          </PopUp>
          <button type="button" aria-label="ホーム" className={clsx(square, 'w-10 h-[34px] ml-auto opacity-50')}><HomeIcon className="w-6 h-[22px]" /></button>
        </div>
        <div className="mt-1"><GroupHeader>リソース</GroupHeader></div>
        <div className="flex items-start mt-1 h-[34px]">
          <span className="ml-[20px] mt-[6px]"><FolderIcon /></span>
          <PopUp label="リソース" options={['登録画面']} arrow="updown" pad="pl-[56px]" className="w-[398px] h-7 ml-[19px]">
            <span className="pl-[2px]"><FolderIcon /></span>
          </PopUp>
          <button type="button" aria-label="上の階層へ" className={clsx(square, 'w-10 h-[34px] ml-auto')}><FolderIcon up /></button>
        </div>
        <div className="mt-2 flex-1 border-2 border-[#bcbcbc] border-t-[#8c8c8c] bg-white">
          <table className="w-full table-fixed text-[18px] leading-6 text-left">
            <thead>
              <tr className="h-[34px]">
                <th className="w-[366px] pl-2 pb-[3px] font-normal border-b border-r-2 border-[#6f9fd0] bg-linear-to-b from-[#c4dcf4] via-[#86bdf0] to-[#b8e4fc]">
                  <span className="flex items-center justify-between pr-3">名前<svg viewBox="0 0 14 12" className="w-[14px] h-3"><path d="M7 0L14 12H0Z" fill="#4c86c4" /></svg></span>
                </th>
                <th className="pl-2 pb-[3px] font-normal border-b border-[#b5b5b5] bg-linear-to-b from-white via-[#ececec] to-[#fafafa]">タイプ</th>
              </tr>
            </thead>
            <tbody>
              {resources.map(name => (
                <tr key={name} onClick={() => setSelected(name)} className={clsx('h-[34px]', name === selected && 'bg-[#b3d4fd]')}>
                  <td className="pl-[17px]"><span className="flex items-center gap-[11px] whitespace-nowrap"><ScriptIcon />{name}</span></td>
                  <td className="pl-[2px]">スクリプト</td>
                </tr>
              ))}
            </tbody>
          </table>
        </div>
        <div className="flex items-center gap-[14px] h-[50px] pb-px">
          <button type="button" aria-label="シンボル" className={clsx(square, 'w-10 h-10 opacity-60')}>
            <svg viewBox="0 0 24 24" className="w-6 h-6"><path d="M2 8L10 2L21 5V22H8L2 16Z" fill="#e6e4fa" stroke="#ee9a48" strokeWidth="3" /><path d="M5 9L11 5L16 9V15L10 19L5 15Z" fill="#c8c8ee" /></svg>
          </button>
          <span className="text-[18px] leading-6 font-bold">選択シンボルなし</span>
        </div>
      </div>
    </section>
  );
};

const Grip = () => (
  <div className="w-[18px] shrink-0 flex items-center"><span className="w-[10px] h-[10px] ml-1 rounded-full border border-[#b5b5b5] bg-[#f6f6f6]" /></div>
);

export default function App() {
  return (
    <div className={clsx('min-h-screen flex flex-col bg-[#ececec] text-black overflow-hidden', rootFont)}>
      <Defs />
      <TitleBar />
      <ViewBar />
      <ModeBar />
      <div className="flex-1 flex">
        <aside className="w-[342px] shrink-0 flex flex-col">
          <BasicPalette />
          <ToolSets />
          <Attributes />
        </aside>
        <Grip />
        <DrawingArea />
        <Grip />
        <aside className="w-[546px] shrink-0 flex flex-col">
          <DataPanel />
          <ResourceBrowser />
        </aside>
      </div>
      <footer className="h-7 shrink-0 flex items-center bg-[#d8d8d8] border-t-2 border-[#c9c9c9] pl-4 text-[18px] leading-6">
        ヘルプ:F1
        <svg viewBox="0 0 15 18" className="w-[15px] h-[18px] ml-auto mr-2"><path d="M0 0L15 9L0 18Z" fill="#858585" /></svg>
        <div className="w-[30px] h-full bg-[#ececec]" />
      </footer>
    </div>
  );
}
